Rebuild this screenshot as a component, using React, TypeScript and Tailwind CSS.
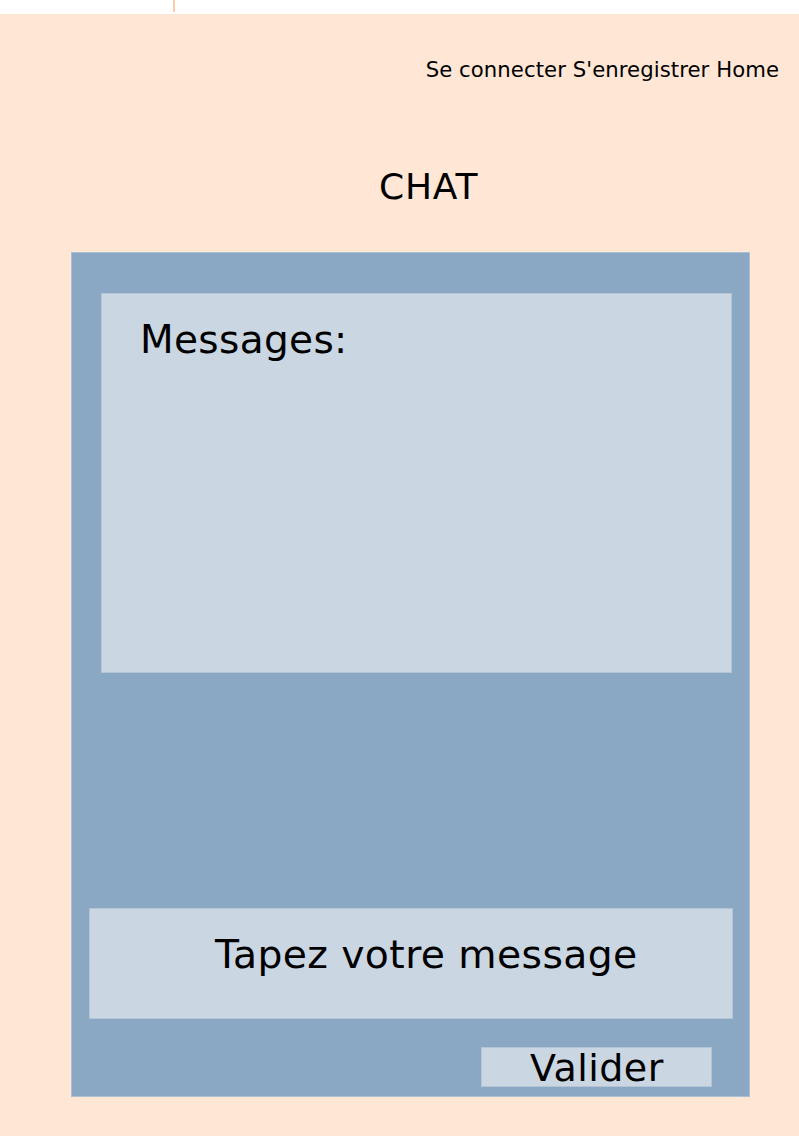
import React from 'react';

// Simple chat page mockup
export default function App() {
  const navLinks = ['Se connecter', "S'enregistrer", 'Home'];

  return (
    <div className="min-h-screen bg-white text-black font-['DejaVu_Sans',sans-serif]">
      {/* Top strip */}
      <div className="h-[14px] pl-[173px] bg-white">
        <div className="w-[2px] h-[12px] bg-[#ffcaa4]"></div>
      </div>

      <div className="h-[1122px] bg-[#ffe6d5] pt-[45px]">
        {/* Nav */}
        <nav className="flex justify-end gap-[0.32em] pr-[20px] text-[21.2px] leading-none tracking-[0.07px]">
          {navLinks.map((link) => (
            <a key={link} href="#" className="text-black">
              {link}
            </a>
          ))}
        </nav>

        {/* Title */}
        <h1 className="mt-[89px] pl-[379px] text-[36px] leading-none font-normal tracking-[0.8px]">CHAT</h1>

        {/* Chat panel */}
        <div className="mt-[47px] ml-[71px] w-[679px] h-[845px] bg-[#8aa8c4] border border-[#a9bfd3] flex flex-col">
          <div className="mt-[40px] ml-[29px] w-[631px] h-[380px] bg-[#cad6e2] border border-[#b4c5d6] pt-[26px] pl-[38px]">
            <div className="text-[39px] leading-none tracking-[0.35px]">Messages:</div>
          </div>

          <div className="mt-[235px] ml-[17px] w-[644px] h-[111px] bg-[#cad6e2] border border-[#b4c5d6] pt-[26px] pl-[125px]">
            <div className="text-[39.3px] leading-none tracking-[0.4px]">Tapez votre message</div>
          </div>

          <button className="mt-[28px] ml-[409px] w-[231px] h-[40px] bg-[#cad6e2] border border-[#b4c5d6] flex items-start pl-[48px] pt-[1px] text-[38px] leading-none tracking-[0.45px] text-black">
            Valider
          </button>
        </div>
      </div>
    </div>
  );
}
